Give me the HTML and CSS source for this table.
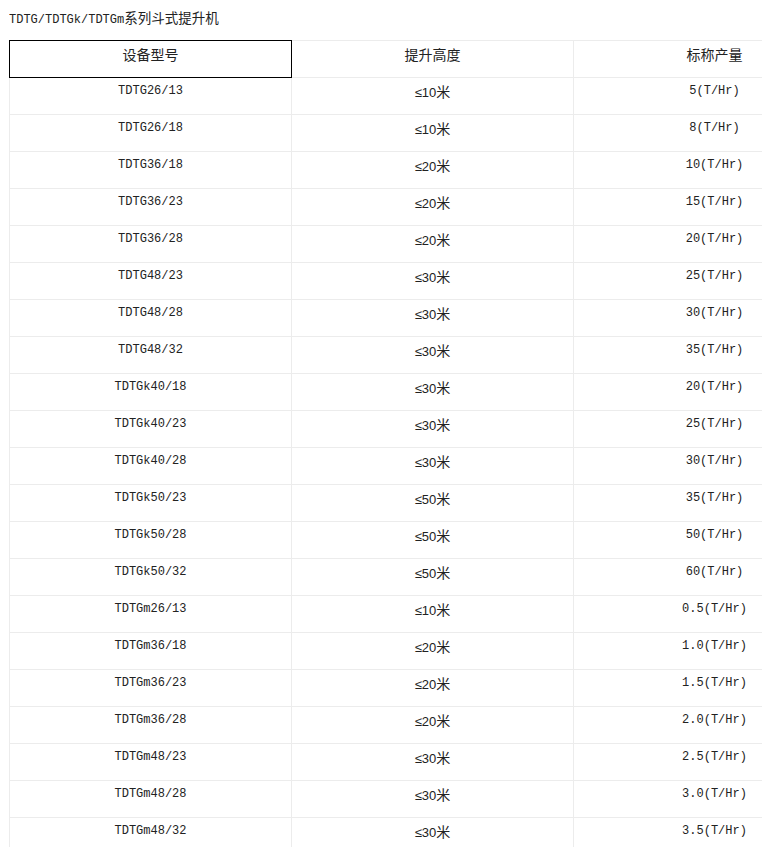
FILE: index.html
```html
<!DOCTYPE html>
<html lang="zh-CN">
<head>
    <meta charset="UTF-8">
    <title>TDTG/TDTGk/TDTGm系列斗式提升机</title>
    <link rel="stylesheet" href="styles.css">
</head>
<body>
    <!-- Title -->
    <div class="title">TDTG/TDTGk/TDTGm<span class="cn">系列斗式提升机</span></div>

    <!-- Spec table -->
    <table class="spec">
        <colgroup><col><col><col></colgroup>
        <thead>
            <tr>
                <th class="picked">设备型号</th>
                <th>提升高度</th>
                <th>标称产量</th>
            </tr>
        </thead>
        <tbody>
            <tr><td>TDTG26/13</td><td class="h">≤10<span class="cn">米</span></td><td>5(T/Hr)</td></tr>
            <tr><td>TDTG26/18</td><td class="h">≤10<span class="cn">米</span></td><td>8(T/Hr)</td></tr>
            <tr><td>TDTG36/18</td><td class="h">≤20<span class="cn">米</span></td><td>10(T/Hr)</td></tr>
            <tr><td>TDTG36/23</td><td class="h">≤20<span class="cn">米</span></td><td>15(T/Hr)</td></tr>
            <tr><td>TDTG36/28</td><td class="h">≤20<span class="cn">米</span></td><td>20(T/Hr)</td></tr>
            <tr><td>TDTG48/23</td><td class="h">≤30<span class="cn">米</span></td><td>25(T/Hr)</td></tr>
            <tr><td>TDTG48/28</td><td class="h">≤30<span class="cn">米</span></td><td>30(T/Hr)</td></tr>
            <tr><td>TDTG48/32</td><td class="h">≤30<span class="cn">米</span></td><td>35(T/Hr)</td></tr>
            <tr><td>TDTGk40/18</td><td class="h">≤30<span class="cn">米</span></td><td>20(T/Hr)</td></tr>
            <tr><td>TDTGk40/23</td><td class="h">≤30<span class="cn">米</span></td><td>25(T/Hr)</td></tr>
            <tr><td>TDTGk40/28</td><td class="h">≤30<span class="cn">米</span></td><td>30(T/Hr)</td></tr>
            <tr><td>TDTGk50/23</td><td class="h">≤50<span class="cn">米</span></td><td>35(T/Hr)</td></tr>
            <tr><td>TDTGk50/28</td><td class="h">≤50<span class="cn">米</span></td><td>50(T/Hr)</td></tr>
            <tr><td>TDTGk50/32</td><td class="h">≤50<span class="cn">米</span></td><td>60(T/Hr)</td></tr>
            <tr><td>TDTGm26/13</td><td class="h">≤10<span class="cn">米</span></td><td>0.5(T/Hr)</td></tr>
            <tr><td>TDTGm36/18</td><td class="h">≤20<span class="cn">米</span></td><td>1.0(T/Hr)</td></tr>
            <tr><td>TDTGm36/23</td><td class="h">≤20<span class="cn">米</span></td><td>1.5(T/Hr)</td></tr>
            <tr><td>TDTGm36/28</td><td class="h">≤20<span class="cn">米</span></td><td>2.0(T/Hr)</td></tr>
            <tr><td>TDTGm48/23</td><td class="h">≤30<span class="cn">米</span></td><td>2.5(T/Hr)</td></tr>
            <tr><td>TDTGm48/28</td><td class="h">≤30<span class="cn">米</span></td><td>3.0(T/Hr)</td></tr>
            <tr><td>TDTGm48/32</td><td class="h">≤30<span class="cn">米</span></td><td>3.5(T/Hr)</td></tr>
        </tbody>
    </table>
</body>
</html>
```

FILE: styles.css
```css
html, body { margin: 0; padding: 0; overflow: hidden; background: #fff; }
body { padding: 7px 0 0 9px; color: #222; font-family: "Liberation Mono", "Noto Sans CJK SC", monospace; font-size: 12px; }

.cn { font-family: "Noto Sans CJK SC", sans-serif; font-size: 13.5px; }

/* Title */
.title { height: 20px; line-height: 20px; margin-bottom: 13px; white-space: nowrap; overflow: hidden; }

/* Spec table */
.spec { border-collapse: collapse; table-layout: fixed; width: 847px; }
.spec col { width: 282px; }
.spec th, .spec td { border: 1px solid #ececec; text-align: center; vertical-align: top; padding: 0; white-space: nowrap; overflow: hidden; box-sizing: border-box; }
.spec th { font-family: "Noto Sans CJK SC", sans-serif; font-size: 14px; font-weight: normal; line-height: 18px; height: 37px; padding: 4px 0 0; }
.spec th.picked { border: 1px solid #000; }
.spec td { line-height: 17px; height: 37px; padding: 5px 0 0; }
.spec td.h { font-family: "Liberation Sans", "Noto Sans CJK SC", sans-serif; font-size: 13px; }
.spec td.h .cn { font-size: 14px; }
```
